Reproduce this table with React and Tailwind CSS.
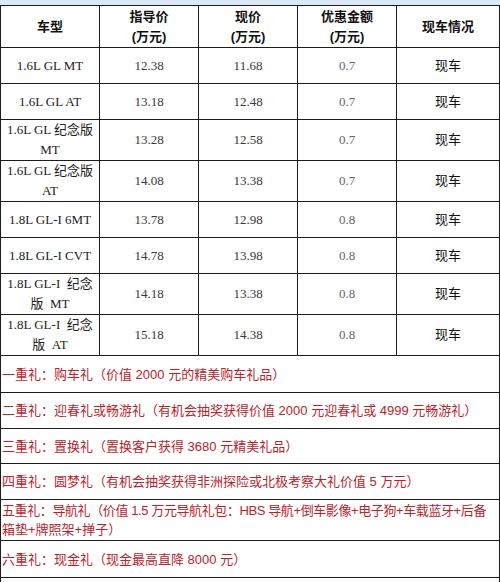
import React from "react";

const rows = [
  { m: ["1.6L GL MT"], g: "12.38", p: "11.68", d: "0.7", h: "h-[36px]" },
  { m: ["1.6L GL AT"], g: "13.18", p: "12.48", d: "0.7", h: "h-[36px]" },
  { m: ["1.6L GL 纪念版", "MT"], g: "13.28", p: "12.58", d: "0.7", h: "h-[41px]" },
  { m: ["1.6L GL 纪念版", "AT"], g: "14.08", p: "13.38", d: "0.7", h: "h-[41px]" },
  { m: ["1.8L GL-I 6MT"], g: "13.78", p: "12.98", d: "0.8", h: "h-[36px]" },
  { m: ["1.8L GL-I CVT"], g: "14.78", p: "13.98", d: "0.8", h: "h-[36px]" },
  { m: ["1.8L GL-I  纪念", "版  MT"], g: "14.18", p: "13.38", d: "0.8", h: "h-[40px]" },
  { m: ["1.8L GL-I  纪念", "版  AT"], g: "15.18", p: "14.38", d: "0.8", h: "h-[41px]" },
];

const gifts = [
  { lines: ["一重礼：购车礼（价值 2000 元的精美购车礼品）"], h: "h-[37px]" },
  { lines: ["二重礼：迎春礼或畅游礼（有机会抽奖获得价值 2000 元迎春礼或 4999 元畅游礼）"], h: "h-[36px]" },
  { lines: ["三重礼：置换礼（置换客户获得 3680 元精美礼品）"], h: "h-[35px]" },
  { lines: ["四重礼：圆梦礼（有机会抽奖获得非洲探险或北极考察大礼价值 5 万元）"], h: "h-[36px]" },
  {
    lines: [
      "五重礼：导航礼（价值 1.5 万元导航礼包：HBS 导航+倒车影像+电子狗+车载蓝牙+后备",
      "箱垫+牌照架+掸子）",
    ],
    h: "h-[41px]",
    tight: true,
  },
  { lines: ["六重礼：现金礼（现金最高直降 8000 元）"], h: "h-[37px]" },
  { lines: [""], h: "h-[37px]" },
];

const serif = "font-['Liberation_Serif','Noto_Sans_CJK_SC',serif]";
const sans = "font-['Liberation_Sans','Noto_Sans_CJK_SC',sans-serif]";
const cell = "border border-[#1c1c1c] text-center align-middle p-0";

export default function App() {
  return (
    <div className="w-[500px] h-[582px] overflow-hidden bg-white">
      <div className="h-[5px] bg-[#dbe8f6]" />
      <table className="w-[499px] table-fixed border-collapse">
        <colgroup>
          <col className="w-[99px]" />
          <col className="w-[99px]" />
          <col className="w-[99px]" />
          <col className="w-[99px]" />
          <col className="w-[103px]" />
        </colgroup>
        <tbody>
          <tr className={`h-[42px] ${sans} font-bold text-[13px] leading-[20px] text-[#111]`}>
            <td className={cell}>车型</td>
            <td className={cell}>
              指导价
              <br />
              (万元)
            </td>
            <td className={cell}>
              现价
              <br />
              (万元)
            </td>
            <td className={cell}>
              优惠金额
              <br />
              (万元)
            </td>
            <td className={cell}>现车情况</td>
          </tr>
          {rows.map((r, i) => (
            <tr key={i} className={`${r.h} ${serif} text-[13px] leading-[20px]`}>
              <td className={`${cell} text-[#222]`}>
                {r.m.map((l, j) => (
                  <div key={j} className="whitespace-pre">{l}</div>
                ))}
              </td>
              <td className={`${cell} text-[#3a3a3a]`}>{r.g}</td>
              <td className={`${cell} text-[#3a3a3a]`}>{r.p}</td>
              <td className={`${cell} text-[#666]`}>{r.d}</td>
              <td className={`${cell} ${sans} text-[#111]`}>现车</td>
            </tr>
          ))}
          {gifts.map((g, i) => (
            <tr key={i} className={`${g.h} ${sans} text-[13px] leading-[19px] text-[#b8242c]`}>
              <td colSpan={5} className="border border-[#1c1c1c] text-left align-middle pl-[1px] pr-0 py-0">
                {g.lines.map((l, j) => (
                  <div
                    key={j}
                    className={g.tight && j === 0 ? "whitespace-nowrap tracking-[-0.4px]" : "whitespace-nowrap"}
                  >
                    {l}
                  </div>
                ))}
              </td>
            </tr>
          ))}
        </tbody>
      </table>
    </div>
  );
}
